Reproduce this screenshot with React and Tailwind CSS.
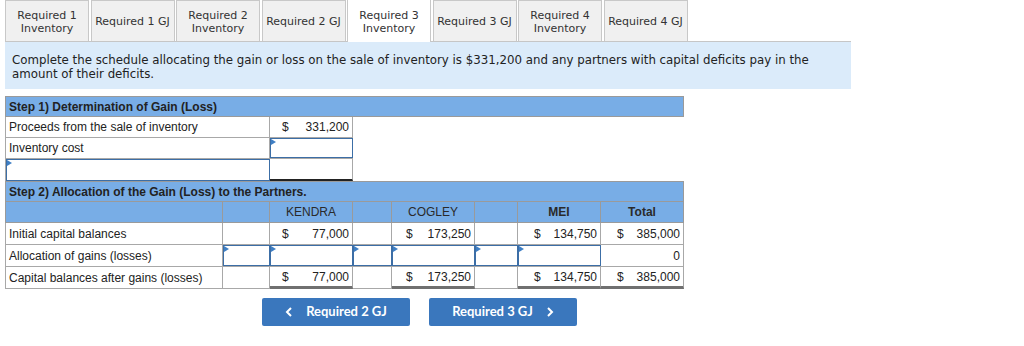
import React from "react";

const tabs = [
  ["Required 1", "Inventory"],
  ["Required 1 GJ"],
  ["Required 2", "Inventory"],
  ["Required 2 GJ"],
  ["Required 3", "Inventory"],
  ["Required 3 GJ"],
  ["Required 4", "Inventory"],
  ["Required 4 GJ"],
];

function Flag() {
  return (
    <span className="absolute left-0 top-0 block w-0 h-0 border-t-[3px] border-b-[3px] border-l-[5px] border-t-transparent border-b-transparent border-l-[#3f7fc4]" />
  );
}

function InputCell({ w }) {
  return (
    <div className={`${w} h-full bg-white border-[1.5px] border-[#3c6ea6] relative shrink-0`}>
      <Flag />
    </div>
  );
}

function Cell({ w, children, className = "" }) {
  return (
    <div className={`${w} h-full shrink-0 border-r border-[#a8a8a8] bg-white flex items-center ${className}`}>
      {children}
    </div>
  );
}

function Money({ v, pl = "pl-[12px]" }) {
  return (
    <div className={`w-full flex items-center justify-between ${pl} pr-[3px]`}>
      <span>$</span>
      <span>{v}</span>
    </div>
  );
}

export default function App() {
  return (
    <div className="w-[1024px] h-[346px] bg-white relative overflow-hidden" style={{ fontFamily: '"Liberation Sans", Arial, sans-serif' }}>
      {/* Tabs */}
      <div className="pl-[5px] w-[851px]" style={{ fontFamily: '"DejaVu Sans", Verdana, sans-serif' }}>
        <div className="flex gap-[1.5px] h-[42px] items-end border-b border-[#c6c6c6]">
          {tabs.map((t, i) => {
            const active = i === 4;
            return (
              <div
                key={i}
                className={`w-[84px] shrink-0 flex flex-col items-center justify-center pt-[1px] text-[11px] leading-[13px] text-[#333] border border-b-0 border-[#c8c8c8] ${
                  active ? "bg-white h-[43px] -mb-px" : "bg-[#f0f0f0] h-[41px]"
                }`}
              >
                {t.map((l, j) => (
                  <span key={j}>{l}</span>
                ))}
              </div>
            );
          })}
        </div>
        <div className="bg-[#dbebfa] h-[47px] px-[7px] pt-[11px] text-[11.8px] leading-[14px] text-[#222]">
          Complete the schedule allocating the gain or loss on the sale of inventory is $331,200 and any partners with capital deficits pay in the amount of their deficits.
        </div>
      </div>

      {/* Table */}
      <div className="ml-[5px] mt-[7px] w-[679px] text-[12px] text-[#222]">
        {/* Step 1 header */}
        <div className="h-[21px] bg-[#78ade6] border border-[#9a9a9a] flex items-center pl-[3px] font-bold">
          Step 1) Determination of Gain (Loss)
        </div>
        <div className="flex h-[21px] w-[348px] border-l border-b border-[#a8a8a8]">
          <Cell w="w-[264px]" className="pl-[3px]">Proceeds from the sale of inventory</Cell>
          <Cell w="w-[83px]">
            <Money v="331,200" pl="pl-[12px]" />
          </Cell>
        </div>
        <div className="flex h-[21px] w-[348px] border-l border-b border-[#a8a8a8]">
          <Cell w="w-[264px]" className="pl-[3px]">Inventory cost</Cell>
          <InputCell w="w-[83px]" />
        </div>
        <div className="flex h-[22px] w-[348px] border-l border-[#a8a8a8]">
          <InputCell w="w-[264px]" />
          <div className="w-[83px] h-full border-r border-b-2 border-[#a8a8a8] border-b-[#222] bg-white" />
        </div>

        {/* Step 2 header */}
        <div className="h-[21px] bg-[#78ade6] border border-[#9a9a9a] flex items-center pl-[3px] font-bold">
          Step 2) Allocation of the Gain (Loss) to the Partners.
        </div>
        <div className="flex h-[21px] bg-[#78ade6] border-l border-b border-[#9a9a9a] font-bold text-[#2a2a2a]">
          <div className="w-[217px] border-r border-[#9a9a9a]" />
          <div className="w-[47px] border-r border-[#9a9a9a]" />
          <div className="w-[83px] border-r border-[#9a9a9a] flex items-center justify-center font-normal">KENDRA</div>
          <div className="w-[39px] border-r border-[#9a9a9a]" />
          <div className="w-[83px] border-r border-[#9a9a9a] flex items-center justify-center font-normal">COGLEY</div>
          <div className="w-[43px] border-r border-[#9a9a9a]" />
          <div className="w-[83px] border-r border-[#9a9a9a] flex items-center justify-center">MEI</div>
          <div className="w-[83px] border-r border-[#9a9a9a] flex items-center justify-center">Total</div>
        </div>
        {/* Initial capital */}
        <div className="flex h-[22px] border-l border-b border-[#a8a8a8]">
          <Cell w="w-[217px]" className="pl-[3px]">Initial capital balances</Cell>
          <Cell w="w-[47px]" />
          <Cell w="w-[83px]"><Money v="77,000" /></Cell>
          <Cell w="w-[39px]" />
          <Cell w="w-[83px]"><Money v="173,250" pl="pl-[14px]" /></Cell>
          <Cell w="w-[43px]" />
          <Cell w="w-[83px]"><Money v="134,750" pl="pl-[16px]" /></Cell>
          <Cell w="w-[83px]"><Money v="385,000" pl="pl-[16px]" /></Cell>
        </div>
        {/* Allocation */}
        <div className="flex h-[22px] border-l border-b border-[#a8a8a8]">
          <Cell w="w-[217px]" className="pl-[3px]">Allocation of gains (losses)</Cell>
          <InputCell w="w-[47px]" />
          <InputCell w="w-[83px]" />
          <InputCell w="w-[39px]" />
          <InputCell w="w-[83px]" />
          <InputCell w="w-[43px]" />
          <InputCell w="w-[83px]" />
          <Cell w="w-[83px]" className="justify-end pr-[3px]">0</Cell>
        </div>
        {/* After */}
        <div className="flex h-[22px] border-l border-[#a8a8a8]">
          <Cell w="w-[217px]" className="pl-[3px] border-b border-b-[#a8a8a8]">Capital balances after gains (losses)</Cell>
          <Cell w="w-[47px]" className="border-b border-b-[#a8a8a8]" />
          <Cell w="w-[83px]" className="border-b-[3px] border-b-[#707070]"><Money v="77,000" /></Cell>
          <Cell w="w-[39px]" className="border-b border-b-[#a8a8a8]" />
          <Cell w="w-[83px]" className="border-b-[3px] border-b-[#707070]"><Money v="173,250" pl="pl-[14px]" /></Cell>
          <Cell w="w-[43px]" className="border-b border-b-[#a8a8a8]" />
          <Cell w="w-[83px]" className="border-b-[3px] border-b-[#707070]"><Money v="134,750" pl="pl-[16px]" /></Cell>
          <Cell w="w-[83px]" className="border-b-[3px] border-b-[#707070]"><Money v="385,000" pl="pl-[16px]" /></Cell>
        </div>
      </div>

      {/* Buttons */}
      <div className="flex gap-[19px] ml-[262px] mt-[9px]" style={{ fontFamily: 'Lato, sans-serif' }}>
        <button className="w-[148px] h-[28px] bg-[#3a77bd] rounded-[2px] text-white font-bold text-[13px] flex items-center justify-center gap-[13px]">
          <svg width="8" height="10" viewBox="0 0 8 10"><path d="M6 1 L2 5 L6 9" stroke="white" strokeWidth="2" fill="none" /></svg>
          <span>Required 2 GJ</span>
        </button>
        <button className="w-[148px] h-[28px] bg-[#3a77bd] rounded-[2px] text-white font-bold text-[13px] flex items-center justify-center gap-[13px]">
          <span>Required 3 GJ</span>
          <svg width="8" height="10" viewBox="0 0 8 10"><path d="M2 1 L6 5 L2 9" stroke="white" strokeWidth="2" fill="none" /></svg>
        </button>
      </div>
    </div>
  );
}
